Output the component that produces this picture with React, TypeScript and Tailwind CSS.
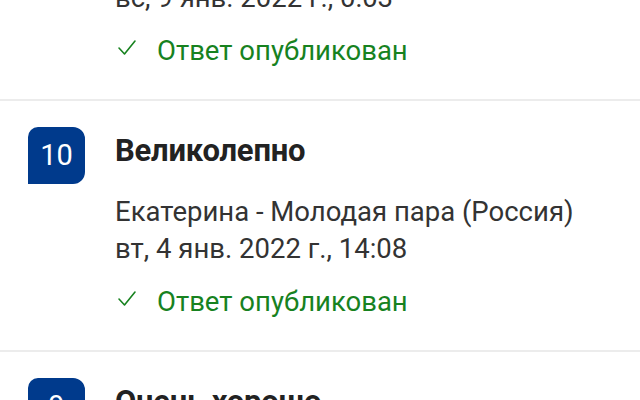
import React from "react";

type Review = {
    score: number;
    title: string;
    author: string;
    date: string;
};

const reviews: Review[] = [
    { score: 10, title: "Великолепно", author: "Андрей - Семья (Россия)", date: "вс, 9 янв. 2022 г., 0:03" },
    { score: 10, title: "Великолепно", author: "Екатерина - Молодая пара (Россия)", date: "вт, 4 янв. 2022 г., 14:08" },
    { score: 9, title: "Очень хорошо", author: "Ольга - Семья (Россия)", date: "пн, 3 янв. 2022 г., 11:21" },
];

function Check() {
    return (
        <svg width="20" height="18" viewBox="0 0 20 18" fill="none" className="shrink-0">
            <polyline points="2,9 7.5,15 18,2" stroke="#17821f" strokeWidth="1.6" strokeLinecap="round" strokeLinejoin="round" />
        </svg>
    );
}

function ReviewItem({ r }: { r: Review }) {
    return (
        <div className="h-[251px] border-b-2 border-[#ececec] flex pt-[26px] pl-[28px]">
            <div className="w-[57px] h-[57px] bg-[#003a8c] rounded-tl-[10px] rounded-tr-[12px] rounded-br-[12px] flex items-center justify-center text-white text-[29px] shrink-0">
                {r.score}
            </div>
            <div className="ml-[30px] flex flex-col">
                <div className="h-[48px] leading-[48px] text-[31px] font-bold text-[#222222] tracking-[-0.2px]">{r.title}</div>
                <div className="mt-[18px] leading-[37px] text-[27.5px] text-[#333333]">
                    <div>{r.author}</div>
                    <div>{r.date}</div>
                </div>
                <div className="mt-[16px] h-[37px] flex items-center">
                    <div className="ml-[2px] -mt-[6px]">
                        <Check />
                    </div>
                    <span className="ml-[20px] text-[27.5px] leading-[37px] text-[#17821f]">Ответ опубликован</span>
                </div>
            </div>
        </div>
    );
}

export default function App() {
    return (
        <div className="w-[640px] h-[400px] overflow-hidden bg-white" style={{ fontFamily: "Roboto, 'Noto Sans', sans-serif" }}>
            <div className="-mt-[150px]">
                {reviews.map((r, i) => (
                    <ReviewItem key={i} r={r} />
                ))}
            </div>
        </div>
    );
}
